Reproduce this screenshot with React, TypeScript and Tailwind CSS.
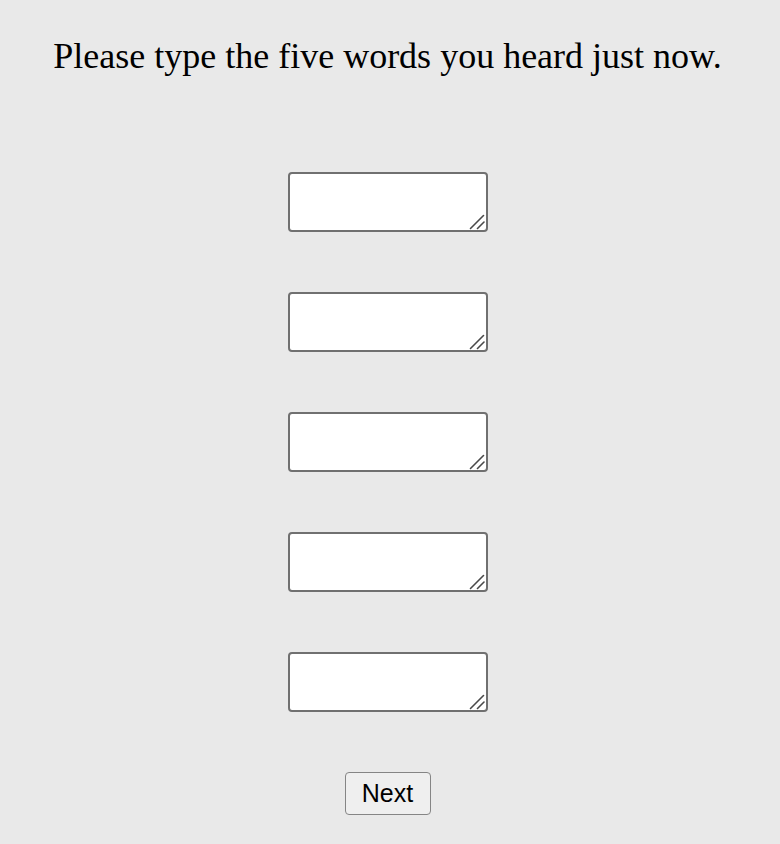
import React from "react";

function Grip() {
  return (
    <svg
      className="absolute pointer-events-none"
      style={{ right: 3, bottom: 2 }}
      width="16"
      height="16"
      viewBox="0 0 16 16"
    >
      <line x1="1.5" y1="14.5" x2="14.5" y2="1.5" stroke="#4a4a4a" strokeWidth="1.6" strokeLinecap="round" />
      <line x1="8.5" y1="14.5" x2="15" y2="8" stroke="#4a4a4a" strokeWidth="1.6" strokeLinecap="round" />
    </svg>
  );
}

export default function App() {
  const items = [0, 1, 2, 3, 4];
  return (
    <div className="min-h-[844px] w-full bg-[#e9e9e9] flex flex-col items-center pt-[36px] pr-[5px]">
      <h1 className="text-[36px] leading-[41px] text-black font-['Liberation_Serif','Times_New_Roman',serif] font-normal">
        Please type the five words you heard just now.
      </h1>
      <div className="mt-[95px] flex flex-col items-center gap-[60px]">
        {items.map((i) => (
          <div key={i} className="relative w-[200px] h-[60px]">
            <textarea className="block w-[200px] h-[60px] bg-white border-2 border-[#707070] rounded-[4px] p-[2px] outline-none resize-none" />
            <Grip />
          </div>
        ))}
        <button className="w-[86px] h-[43px] bg-[#efefef] border border-[#858585] rounded-[4px] text-[25px] leading-none text-black font-['Liberation_Sans',Arial,sans-serif]">
          Next
        </button>
      </div>
    </div>
  );
}
